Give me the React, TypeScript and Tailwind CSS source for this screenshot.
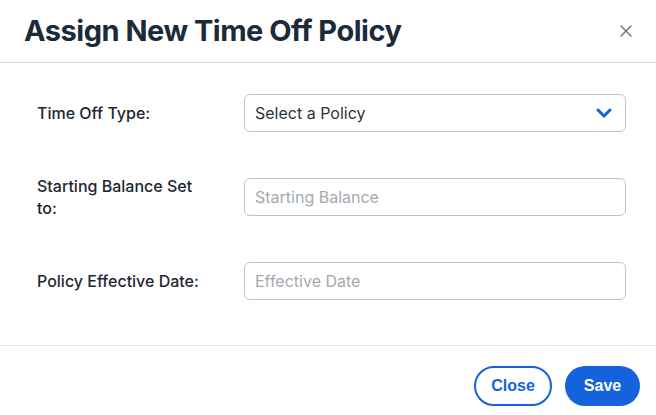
import { X, ChevronDown } from "lucide-react";

function Row({ label, children }: { label: React.ReactNode; children: React.ReactNode }) {
  return (
    <div className="flex h-[38px] items-center">
      <div className="w-[207px] shrink-0 pr-6 text-[16px] font-medium leading-[22px] text-[#1d2733] [font-family:Inter,sans-serif]">
        {label}
      </div>
      <div className="flex-1">{children}</div>
    </div>
  );
}

export default function App() {
  return (
    <div className="w-[656px] h-[415px] bg-white overflow-hidden">
      {/* Header */}
      <div className="flex h-[63px] items-center justify-between border-b border-[#c8dae8] pl-6 pr-5">
        <h1 className="text-[29px] font-bold tracking-[-0.5px] text-[#1c2b39] [font-family:Inter,sans-serif]">
          Assign New Time Off Policy
        </h1>
        <X className="h-5 w-5 text-[#6b7280]" strokeWidth={1.75} />
      </div>

      {/* Body */}
      <div className="flex flex-col gap-[46px] pb-[45px] pl-[37px] pr-[30px] pt-[31px] border-b border-[#e3e6ea]">
        <Row label="Time Off Type:">
          <div className="flex h-[38px] items-center justify-between rounded-md border border-[#b6c6d6] pl-[10px] pr-[9px] text-[16px] text-[#2a3441] [font-family:Inter,sans-serif]">
            <span>Select a Policy</span>
            <ChevronDown className="h-6 w-6 text-[#1463dc]" strokeWidth={3} />
          </div>
        </Row>
        <Row label={<>Starting Balance Set<br />to:</>}>
          <div className="flex h-[38px] items-center rounded-md border border-[#b6c6d6] pl-[10px] text-[16px] text-[#a3a9b1] [font-family:Inter,sans-serif]">
            Starting Balance
          </div>
        </Row>
        <Row label="Policy Effective Date:">
          <div className="flex h-[38px] items-center rounded-md border border-[#b6c6d6] pl-[10px] text-[16px] text-[#a3a9b1] [font-family:Inter,sans-serif]">
            Effective Date
          </div>
        </Row>
      </div>

      {/* Footer */}
      <div className="flex justify-end gap-[13px] pr-4 pt-[20px]">
        <button className="h-[40px] w-[78px] rounded-full border-2 border-[#1463dc] bg-white text-[16px] font-bold text-[#1463dc] [font-family:'Liberation_Sans',Arial,sans-serif]">
          Close
        </button>
        <button className="h-[40px] w-[75px] rounded-full bg-[#1463dc] text-[16px] font-bold text-white [font-family:'Liberation_Sans',Arial,sans-serif]">
          Save
        </button>
      </div>
    </div>
  );
}
